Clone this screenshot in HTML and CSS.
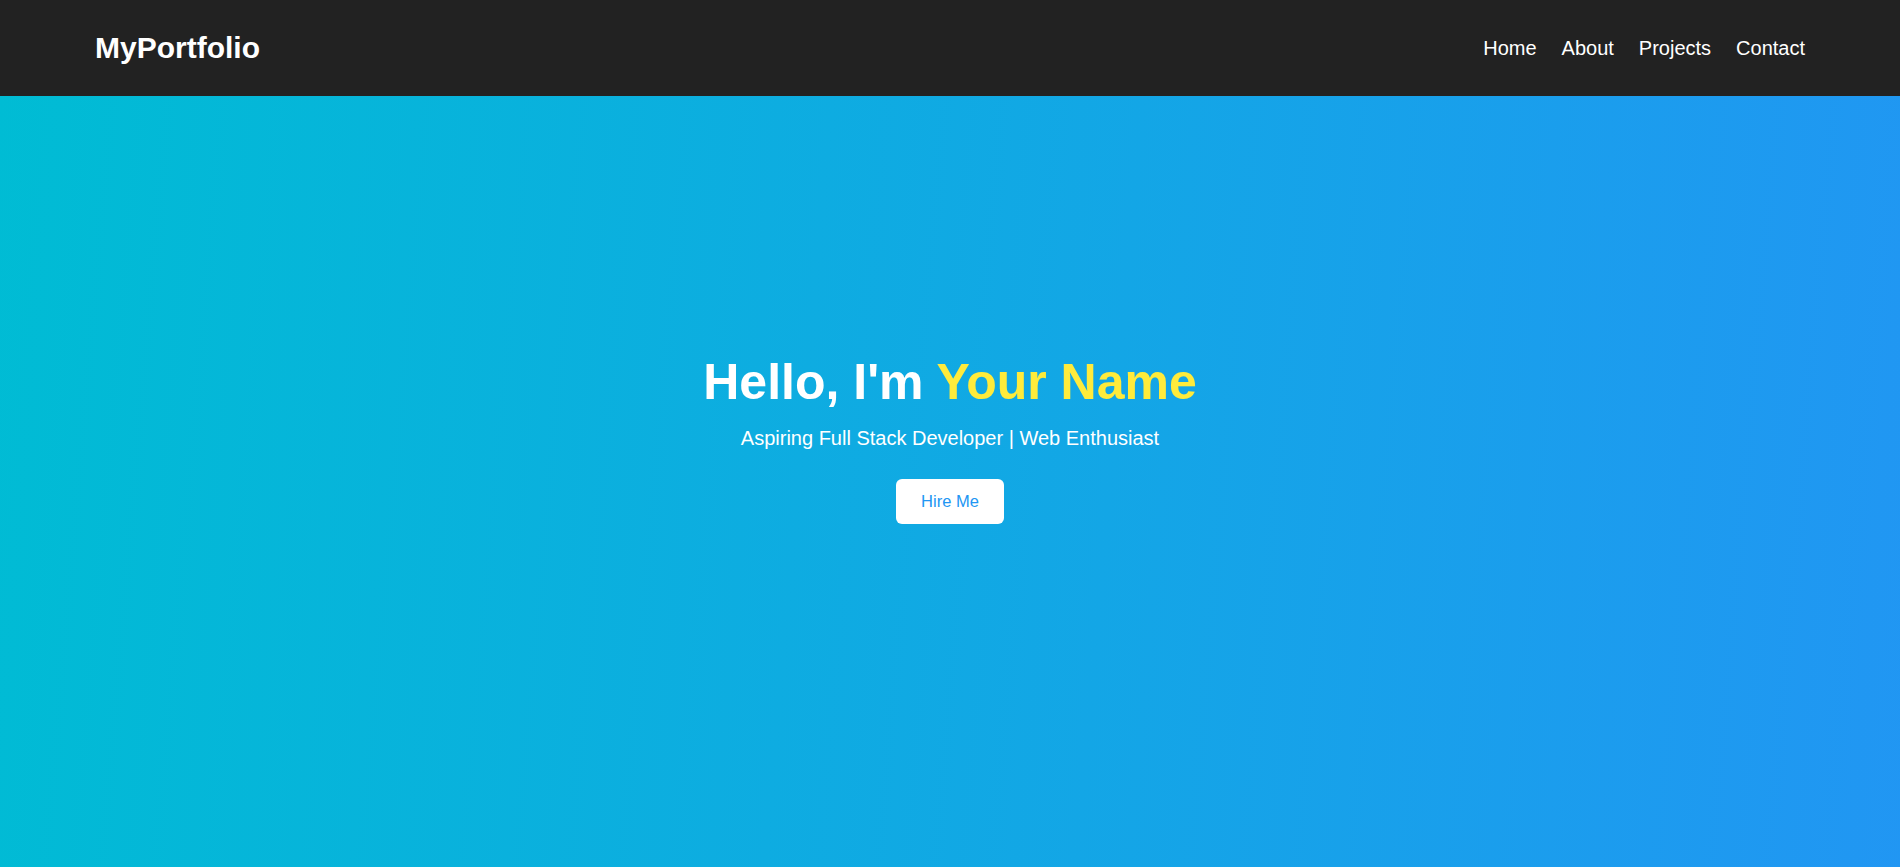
FILE: index.html
```html
<!DOCTYPE html>
<html lang="en">
<head>
<meta charset="utf-8">
<title>MyPortfolio</title>
<link rel="stylesheet" href="styles.css">
</head>
<body>
  <div class="page">
    <header class="site-header">
      <div class="logo">MyPortfolio</div>
      <nav class="nav">
        <a href="#home" class="nav-link">Home</a>
        <a href="#about" class="nav-link">About</a>
        <a href="#projects" class="nav-link">Projects</a>
        <a href="#contact" class="nav-link">Contact</a>
      </nav>
    </header>
    <section class="hero" id="home">
      <h1 class="hero-title">Hello, I'm <span class="highlight">Your Name</span></h1>
      <p class="hero-subtitle">Aspiring Full Stack Developer | Web Enthusiast</p>
      <a href="#contact" class="btn">Hire Me</a>
    </section>
  </div>
</body>
</html>
```

FILE: styles.css
```css
* {
  box-sizing: border-box;
}

body {
  margin: 0;
  padding-right: 4px;
  background: #ffffff;
  font-family: "Liberation Sans", Arial, sans-serif;
  color: #ffffff;
  height: 867px;
  overflow: hidden;
}

.page {
  width: 100%;
}

.site-header {
  height: 96px;
  background: #222222;
  display: flex;
  align-items: center;
  justify-content: space-between;
  padding: 0 5%;
}

.logo {
  font-size: 30px;
  font-weight: 700;
  color: #ffffff;
}

.nav {
  display: flex;
  gap: 25px;
}

.nav-link {
  color: #ffffff;
  text-decoration: none;
  font-size: 20px;
}

.hero {
  height: 867px;
  background: linear-gradient(95deg, #00bcd4, #2196f3);
  display: flex;
  flex-direction: column;
  align-items: center;
  justify-content: center;
  text-align: center;
  padding-bottom: 182px;
}

.hero-title {
  margin: 0 0 16px;
  font-size: 50px;
  font-weight: 700;
  line-height: 57px;
}

.highlight {
  color: #ffeb3b;
}

.hero-subtitle {
  margin: 0 0 29px;
  font-size: 20px;
  line-height: 23px;
}

.btn {
  display: inline-block;
  background: #ffffff;
  color: #2196f3;
  text-decoration: none;
  font-size: 16.5px;
  line-height: 19px;
  padding: 13px 25px;
  border-radius: 6px;
}
```
